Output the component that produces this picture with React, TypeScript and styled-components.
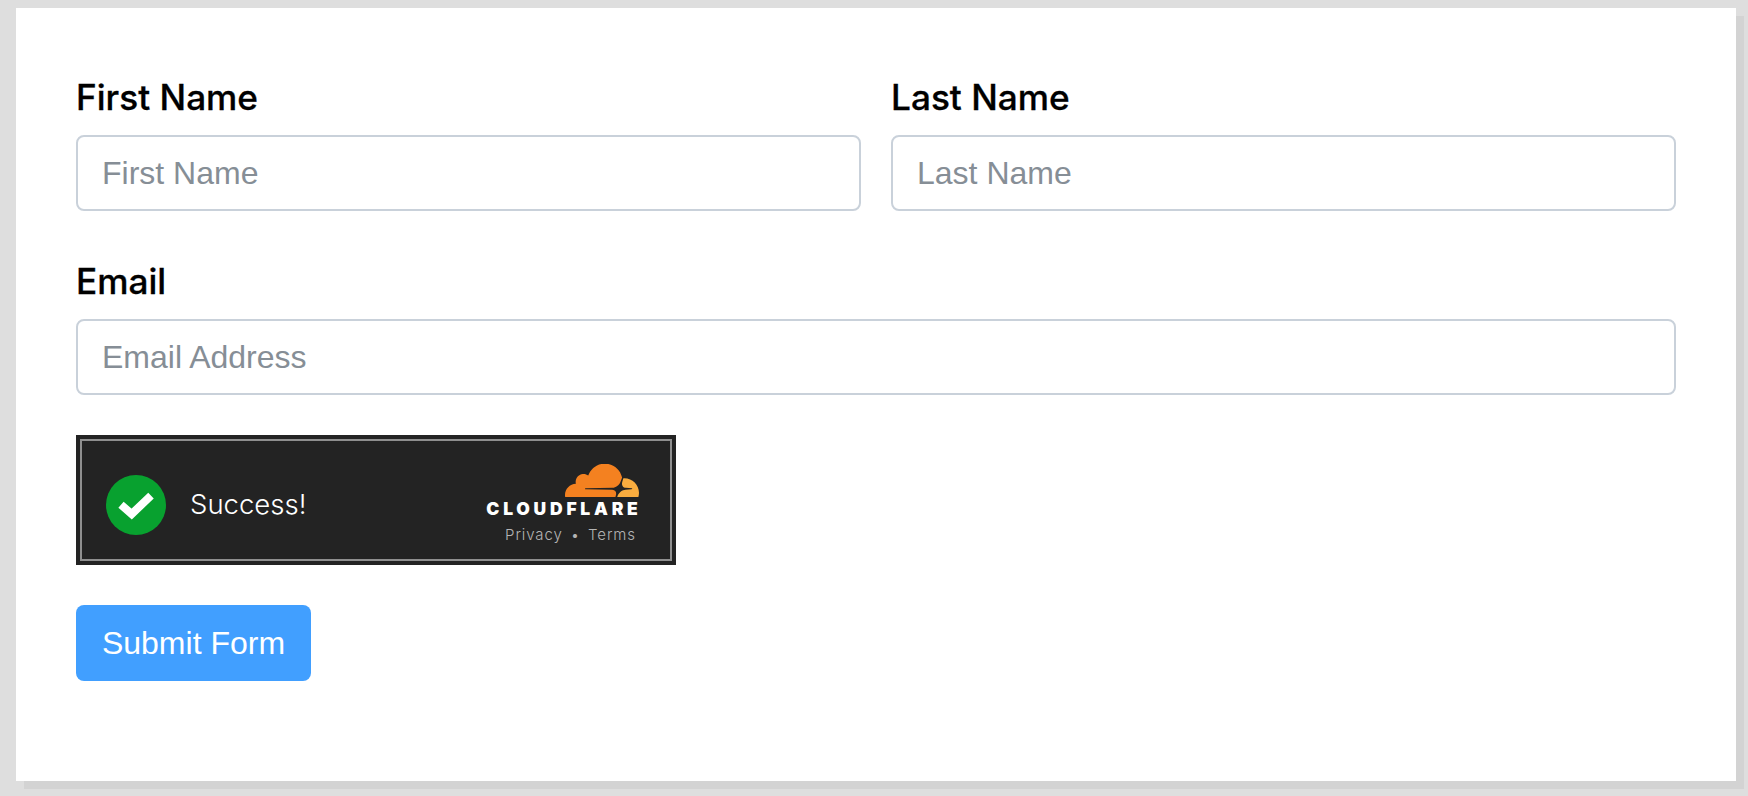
import styled, { createGlobalStyle } from "styled-components"

const GlobalStyle = createGlobalStyle`
  html, body {
    margin: 0;
    height: 100%;
    background: #dedede;
  }
  * {
    box-sizing: border-box;
  }
`

const Page = styled.div`
  height: 796px;
  padding: 8px 12px 0 16px;
  overflow: hidden;
`

const Panel = styled.form`
  width: 1720px;
  height: 773px;
  background: #ffffff;
  box-shadow: 8px 8px 0 #d3d3d3;
  padding: 65px 60px 0;
  display: flex;
  flex-direction: column;
  align-items: flex-start;
`

const Row = styled.div`
  width: 100%;
  display: flex;
  gap: 30px;
  margin-bottom: 46px;
`

const EmailRow = styled(Row)`
  margin-bottom: 40px;
`

const Field = styled.div`
  flex: 1;
  display: flex;
  flex-direction: column;
`

const Label = styled.label`
  font-family: Inter, "Liberation Sans", sans-serif;
  font-size: 35.2px;
  font-weight: 500;
  line-height: 48px;
  color: #000000;
  margin-bottom: 14px;
  -webkit-text-stroke: 0.3px #000000;
`

const Input = styled.input`
  width: 100%;
  height: 76px;
  border: 2px solid #c9d1da;
  border-radius: 8px;
  padding: 0 24px;
  font-family: "Liberation Sans", Arial, sans-serif;
  font-size: 32px;
  background: #ffffff;
  outline: none;

  &::placeholder {
    color: #868e96;
    opacity: 1;
  }
`

const Turnstile = styled.div`
  width: 600px;
  height: 130px;
  padding: 4px;
  background: #232323;
  margin-bottom: 40px;
`

const TurnstileInner = styled.div`
  height: 100%;
  border: 2px solid #8f8f8f;
  padding: 9px 31px 0 24px;
  display: flex;
  align-items: center;
  justify-content: space-between;
`

const Status = styled.div`
  display: flex;
  align-items: center;
  gap: 24px;
`

const StatusText = styled.span`
  font-family: Inter, "Liberation Sans", sans-serif;
  font-size: 27.5px;
  font-weight: 300;
  color: #ffffff;
  margin-bottom: 2px;
`

const Brand = styled.div`
  display: flex;
  flex-direction: column;
  align-items: flex-end;
`

const Wordmark = styled.div`
  font-family: Inter, "Liberation Sans", sans-serif;
  font-size: 17.5px;
  font-weight: 900;
  letter-spacing: 3.75px;
  line-height: 16px;
  color: #ffffff;
  margin: 3px -2.6px 0 0;
`

const Links = styled.div`
  display: flex;
  align-items: center;
  gap: 8px;
  margin: 8px 3px 0 0;
  font-family: Inter, "Liberation Sans", sans-serif;
  font-size: 15px;
  font-weight: 300;
  letter-spacing: 0.9px;
  line-height: 20px;
  color: #b4b4b4;
`

const Submit = styled.button`
  width: 235px;
  height: 76px;
  border: none;
  border-radius: 8px;
  background: #419fff;
  color: #ffffff;
  font-family: "Liberation Sans", Arial, sans-serif;
  font-size: 32px;
  padding: 0;
`

function CheckBadge() {
  return (
    <svg width="60" height="60" viewBox="0 0 60 60">
      <circle cx="30" cy="30" r="30" fill="#08a12f" />
      <path d="M15 29.7 L25.7 39 L45 20.7" fill="none" stroke="#ffffff" strokeWidth="8" />
    </svg>
  )
}

function CloudLogo() {
  return (
    <svg width="74" height="34" viewBox="0 6.9 24 10.6">
      <path
        fill="#f48120"
        d="M16.5088 16.8447c.1475-.5068.0908-.9707-.1553-1.3154-.2246-.3164-.6045-.499-1.0615-.5205l-8.6592-.1123a.1559.1559 0 0 1-.1333-.0713c-.0283-.042-.0351-.0986-.021-.1553.0278-.084.1123-.1484.2036-.1562l8.7359-.1123c1.0351-.0489 2.1601-.8868 2.5537-1.9136l.499-1.3013c.0215-.0561.0293-.1128.0147-.168-.5625-2.5463-2.835-4.4453-5.5499-4.4453-2.5039 0-4.6284 1.6177-5.3876 3.8614-.4927-.3658-1.1187-.5625-1.794-.499-1.2026.119-2.1665 1.083-2.2861 2.2856-.0283.31-.0069.6128.0635.894C1.5683 13.171 0 14.7754 0 16.752c0 .1748.0142.3515.0352.5273.0141.083.0844.1475.1689.1475h15.9814c.0909 0 .1758-.0645.2032-.1553l.12-.4268z"
      />
      <path
        fill="#faad3f"
        d="M19.2656 11.2813c-.0771 0-.1611 0-.2383.0112-.0566 0-.1054.0415-.127.0976l-.3378 1.1744c-.1475.5068-.0918.9707.1543 1.3164.2256.3164.6055.498 1.0625.5195l1.8437.1133c.0557 0 .1055.0263.1329.0703.0283.043.0351.1074.0214.1562-.0283.084-.1132.1485-.204.1553l-1.921.1123c-1.041.0488-2.1582.8867-2.5527 1.914l-.1406.3585c-.0283.0713.0215.1416.0986.1416h6.5977c.0771 0 .1474-.0489.169-.126.1122-.4082.1757-.837.1757-1.2803 0-2.6025-2.125-4.727-4.7344-4.7344"
      />
    </svg>
  )
}

export default function App() {
  return (
    <Page>
      <GlobalStyle />
      <Panel>
        <Row>
          <Field>
            <Label>First Name</Label>
            <Input placeholder="First Name" />
          </Field>
          <Field>
            <Label>Last Name</Label>
            <Input placeholder="Last Name" />
          </Field>
        </Row>
        <EmailRow>
          <Field>
            <Label>Email</Label>
            <Input placeholder="Email Address" />
          </Field>
        </EmailRow>
        <Turnstile>
          <TurnstileInner>
            <Status>
              <CheckBadge />
              <StatusText>Success!</StatusText>
            </Status>
            <Brand>
              <CloudLogo />
              <Wordmark>CLOUDFLARE</Wordmark>
              <Links>
                <span>Privacy</span>
                <span>•</span>
                <span>Terms</span>
              </Links>
            </Brand>
          </TurnstileInner>
        </Turnstile>
        <Submit type="button">Submit Form</Submit>
      </Panel>
    </Page>
  )
}
